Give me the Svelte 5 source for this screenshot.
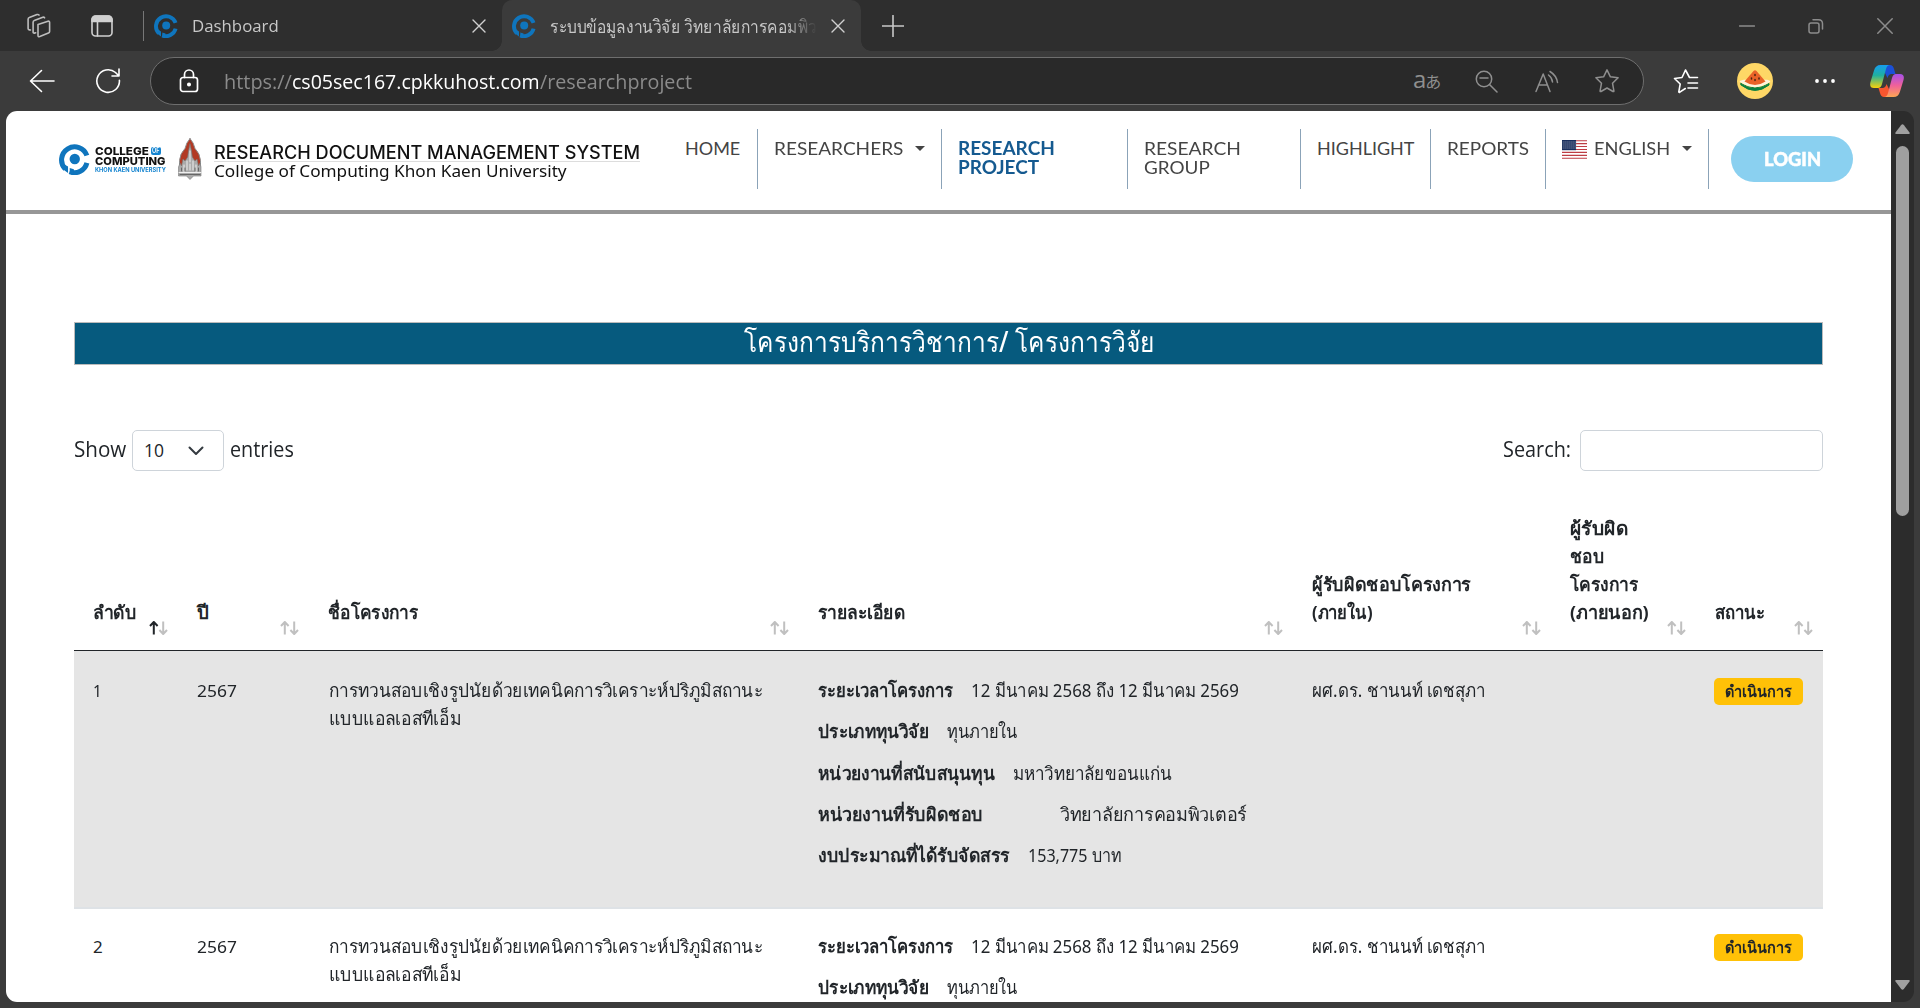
<script>
  const title = 'การทวนสอบเชิงรูปนัยด้วยเทคนิคการวิเคราะห์ปริภูมิสถานะ';
  const nav = [
    { lines: [['HOME', 55]], width: 90 },
    { lines: [['RESEARCHERS', 129]], width: 184, caret: true },
    { lines: [['RESEARCH', 97], ['PROJECT', 81]], width: 186, active: true },
    { lines: [['RESEARCH', 97], ['GROUP', 66]], width: 173 },
    { lines: [['HIGHLIGHT', 97]], width: 130 },
    { lines: [['REPORTS', 82]], width: 115 },
    { lines: [['ENGLISH', 76]], width: 163, caret: true, flag: true }
  ];
  const columns = [
    { lines: [['ลำดับ', 43]], sorted: true },
    { lines: [['ปี', 12]] },
    { lines: [['ชื่อโครงการ', 90]] },
    { lines: [['รายละเอียด', 87]] },
    { lines: [['ผู้รับผิดชอบโครงการ', 159], ['(ภายใน)', 61]] },
    { lines: [['ผู้รับผิด', 58], ['ชอบ', 34], ['โครงการ', 68], ['(ภายนอก)', 79]] },
    { lines: [['สถานะ', 50]] }
  ];
  const details = [
    { label: 'ระยะเวลาโครงการ', lw: 135, value: '12 มีนาคม 2568 ถึง 12 มีนาคม 2569', vw: 268, gap: 18 },
    { label: 'ประเภททุนวิจัย', lw: 111, value: 'ทุนภายใน', vw: 71, gap: 18 },
    { label: 'หน่วยงานที่สนับสนุนทุน', lw: 177, value: 'มหาวิทยาลัยขอนแก่น', vw: 159, gap: 18 },
    { label: 'หน่วยงานที่รับผิดชอบ', lw: 165, value: 'วิทยาลัยการคอมพิวเตอร์', vw: 187, gap: 77 },
    { label: 'งบประมาณที่ได้รับจัดสรร', lw: 192, value: '153,775 บาท', vw: 93, gap: 18 }
  ];
  const rows = [{ no: '1', nw: 9 }, { no: '2', nw: 10 }];

  // Stretches or condenses a run of text so that it fills the given width.
  function fit(node, width) {
    const natural = node.offsetWidth;
    if (natural) node.style.transform = `scaleX(${width / natural})`;
  }
</script>

{#snippet t(text, width)}<span class="fit" style:width="{width}px"><span class="run" use:fit={width}>{text}</span></span>{/snippet}

{#snippet mark(size)}
  <svg class="mark" width={size} height={size} viewBox="0 0 24 24">
    <path d="M4.800 19.300A10.100 10.100 0 1 1 21.600 8.900M21.600 14.600A10 10 0 0 1 8.200 21.500" fill="none" stroke="#0f75bd" stroke-width="3.900" stroke-linecap="butt" />
    <path d="M4.500 16l2.500 1.500v5L3 19.500zM8.300 18.500l3.200 1v4l-3.200-.6z" fill="#0f75bd" />
    <circle cx="12.200" cy="11.600" r="4" fill="#0f75bd" />
  </svg>
{/snippet}

{#snippet cross(size)}
  <svg width={size} height={size} viewBox="0 0 14 14"><path d="M1 1l12 12M13 1L1 13" /></svg>
{/snippet}

<div class="window">
  <div class="tabs">
    <svg class="ic workspaces" width="26" height="26" viewBox="0 0 26 26">
      <path d="M12 11.5 22 8.2q1.6-.4 1.6 1.2v9q0 1.2-1.2 1.6l-8.6 3.6q-1.8.5-1.8-1.2z" />
      <path d="M9.7 19.8l-1.2.3q-1.4.2-1.4-1.2V9.2q0-1.2 1.2-1.6l8.5-3.4q1.2-.4 1.8.7M4.5 17l-1.2-.1q-1.2-.1-1.2-1.4V6.2q0-1.2 1.2-1.6L11 1.6q1.3-.4 2 .5" />
    </svg>
    <svg class="ic panes" width="22" height="22" viewBox="0 0 22 22">
      <rect x="1" y="1" width="20" height="20" rx="3.5" />
      <path d="M1 5a4 4 0 0 1 4-4h12a4 4 0 0 1 4 4v1.5H1z" fill="#d0d0d0" />
      <path d="M6.5 6v15" />
    </svg>
    <i class="split"></i>
    <div class="tab first">
      {@render mark(24)}
      <span class="label">{@render t('Dashboard', 87)}</span>
      <span class="close">{@render cross(14)}</span>
    </div>
    <div class="tab active">
      {@render mark(24)}
      <span class="label fade">{@render t('ระบบข้อมูลงานวิจัย วิทยาลัยการคอมพิวเ', 272)}</span>
      <span class="close">{@render cross(14)}</span>
    </div>
    <svg class="ic plus" width="22" height="22" viewBox="0 0 22 22"><path d="M11 .5v21M.5 11h21" /></svg>
    <div class="controls">
      <svg width="16" height="16" viewBox="0 0 16 16"><path d="M.5 8h15" /></svg>
      <svg width="16" height="16" viewBox="0 0 16 16"><rect x="1" y="5" width="10" height="10" rx="2" /><path d="M5 1.7h5.5q4 0 4 4V11" /></svg>
      <svg width="16" height="16" viewBox="0 0 16 16"><path d="M.8.8l14.4 14.4M15.2.8.8 15.2" /></svg>
    </div>
  </div>

  <div class="toolbar">
    <svg class="ic back" width="26" height="24" viewBox="0 0 26 24"><path d="M1.5 12H25M12.5 1.5 1.5 12l11 10.5" /></svg>
    <svg class="ic reload" width="26" height="26" viewBox="0 0 26 26"><path d="M24.4 12.2A11.3 11.3 0 1 1 20.5 4.5l3 3M24 1v7h-7" /></svg>
    <div class="address">
      <svg class="lock" width="20" height="24" viewBox="0 0 20 24">
        <rect x="1.5" y="8.5" width="17" height="14" rx="2.5" /><path d="M5.5 8.500V5.500a4.500 4.500 0 0 1 9 0v3" /><circle cx="10" cy="15.500" r="1.200" fill="#fff" />
      </svg>
      <span class="url">{@render t('https://', 68)}<b>{@render t('cs05sec167.cpkkuhost.com', 248)}</b>{@render t('/researchproject', 152)}</span>
      <span class="translate"><span>a</span><span class="kana">あ</span></span>
      <svg class="zoomout" width="23" height="23" viewBox="0 0 23 23"><circle cx="9" cy="9" r="7.7" /><path d="M14.5 14.5l7.5 7.5M5 8h8" /></svg>
      <svg class="aloud" width="24" height="23" viewBox="0 0 24 23"><path d="M1 21.500 8.200 4 15 21.500M3.500 15h9M13.500 5q3.500 2.500 4 7M15 1.500q6.500 4 7.500 11" /></svg>
      <svg class="star" width="26" height="26" viewBox="0 0 26 26"><path d="M13 1.800l3.400 7 7.700 1-5.600 5.400 1.400 7.700q0 1-.9.600L13 20l-6 3.500q-.9.400-.9-.6l1.400-7.700-5.600-5.400 7.700-1z" /></svg>
    </div>
    <svg class="ic favs" width="26" height="26" viewBox="0 0 26 26"><path d="M24.500 9.500h-8L12.500 2 9 9.500l-7.500 1 5.700 5.500-1.400 7.800q.2.900 1 .4l5.500-3.700M15 15h9.500M15 20h9.500" /></svg>
    <svg class="avatar" width="36" height="36" viewBox="0 0 36 36">
      <circle cx="18" cy="18" r="18" fill="#fed766" />
      <path d="M4 20.500q14 9 28 0v1.500q-14 11-28 0z" fill="#0b8040" stroke="#0b8040" />
      <path d="M3.500 18.500q14.500 10 29 0l-2.500-1H7z" fill="#fff4dc" stroke="#fff4dc" stroke-width="1.500" />
      <path d="M16.500 8q1.500-1.500 3 0l9 10.500q-10.500 7-21 0z" fill="#ea6328" />
      <path d="M18 11.500v1M14.500 15v1M18 16.500v1M22 15v1" stroke="#472414" stroke-width="1.500" />
    </svg>
    <svg class="dots" width="20" height="4" viewBox="0 0 20 4"><circle cx="2" cy="2" r="1.900" /><circle cx="10" cy="2" r="1.900" /><circle cx="18" cy="2" r="1.900" /></svg>
    <svg class="copilot" width="34" height="32" viewBox="0 0 34 32">
      <defs>
        <linearGradient id="ca" x1="0" y1="0" x2="0" y2="1"><stop offset="0" stop-color="#169df0" /><stop offset=".45" stop-color="#1fb0a0" /><stop offset="1" stop-color="#f9d20a" /></linearGradient>
        <linearGradient id="cb" x1="0" y1="0" x2="0" y2="1"><stop offset="0" stop-color="#a650ea" /><stop offset=".5" stop-color="#f0619a" /><stop offset="1" stop-color="#fda653" /></linearGradient>
      </defs>
      <path d="M11 0h9q3 0 4 4l1.500 5h-4q-3 0-4 4z" fill="#1b50d8" />
      <path d="M23 32h-9q-3 0-4-4l-1.500-5h4q3 0 4-4z" fill="#f8562f" />
      <path d="M10.500 0H20q-3 0-4 4l-4 15q-1 4-4 4H4q-5 0-3.500-6L4 5.500Q5.500 0 10.500 0z" fill="url(#ca)" />
      <path d="M23.500 32H14q3 0 4-4l4-15q1-4 4-4h4q5 0 3.500 6L30 26.500q-1.500 5.500-6.500 5.500z" fill="url(#cb)" />
    </svg>
  </div>

  <div class="view">
    <main class="page">
      <header>
        <div class="brand">
          {@render mark(31)}
          <div class="college">
            <div class="cl">{@render t('COLLEGE', 54)}<span class="of">{@render t('OF', 8)}</span></div>
            <div class="cl">{@render t('COMPUTING', 71)}</div>
            <div class="kku">{@render t('KHON KAEN UNIVERSITY', 71)}</div>
          </div>
          <svg class="temple" width="26" height="42" viewBox="0 0 26 42">
            <path d="M13 .5Q17 5 18 10.500q5 5 5.500 12V33H2.500V22.500Q3 15.500 8 10.500 9 5 13 .5z" fill="#b23a24" stroke="#8e8e8e" />
            <path d="M13 6l1.500 7 .8 6 2.700 4 2-2 1.500 7 1.500-3 1 4v9h-7.500L13 41.500 9.500 38H1.500v-9l1.500-4 1.500 3L6 21l2 2 2.700-4 .8-6z" fill="#aaa" stroke="#777" stroke-width=".6" />
            <path d="M13 13v11M10 23v9M16 23v9M7 27v7M19 27v7M2 34.500h22M13 26v6" stroke="#eee" />
            <path d="M3 36.500h20M8 30v3M18 30v3M4.500 30v3M21.500 30v3" stroke="#666" />
          </svg>
          <div class="system">
            <div class="sys">{@render t('RESEARCH DOCUMENT MANAGEMENT SYSTEM', 426)}</div>
            <div class="sub">{@render t('College of Computing Khon Kaen University', 353)}</div>
          </div>
        </div>
        <nav>
          {#each nav as item}
            <a class:current={item.active} style:width="{item.width}px">
              {#if item.flag}
                <svg class="flag" width="25" height="19" viewBox="0 0 25 19">
                  <rect width="25" height="19" fill="#fff" />
                  <path d="M0 .7h25M0 3.600h25M0 6.500h25M0 9.500h25M0 12.400h25M0 15.400h25M0 18.300h25" stroke="#bd3d44" stroke-width="1.100" />
                  <rect width="14" height="10.200" fill="#192f5d" />
                  <path d="M1 2h13M1 4h13M1 6h13M1 8h13" stroke="#8c97ae" stroke-width=".7" stroke-dasharray="1 1" />
                </svg>
              {/if}
              <span class="words">{#each item.lines as [text, w]}<span class="line">{@render t(text, w)}</span>{/each}</span>
              {#if item.caret}<i class="caret"></i>{/if}
            </a>
          {/each}
        </nav>
        <button class="login">{@render t('LOGIN', 57)}</button>
      </header>

      <section class="content">
        <h4>{@render t('โครงการบริการวิชาการ/ โครงการวิจัย', 410)}</h4>
        <div class="tools">
          <div class="length">
            {@render t('Show', 52)}
            <span class="select">{@render t('10', 20)}
              <svg width="16" height="10" viewBox="0 0 16 10"><path d="M1.500 1.500 8 8l6.500-6.500" /></svg>
            </span>
            {@render t('entries', 64)}
          </div>
          <label class="search">{@render t('Search:', 68)}<input /></label>
        </div>

        <div class="row head">
          {#each columns as col}
            <div class="cell">
              {#each col.lines as [text, w]}<div>{@render t(text, w)}</div>{/each}
              <svg class="sort" width="19" height="14" viewBox="0 0 19 14">
                <path class:on={col.sorted} d="M4.800 13.500V1.500M1 5l3.800-4 3.800 4" />
                <path d="M14.200.5v12M10.400 9l3.800 4L18 9" />
              </svg>
            </div>
          {/each}
        </div>
        {#each rows as row, i}
          <div class="row item" class:striped={i % 2 === 0}>
            <div class="cell num">{@render t(row.no, row.nw)}</div>
            <div class="cell num">{@render t('2567', 40)}</div>
            <div class="cell name"><div>{@render t(title, 434)}</div><div>{@render t('แบบแอลเอสทีเอ็ม', 132)}</div></div>
            <div class="cell details">
              {#each details as d}
                <div class="detail" style:gap="{d.gap}px"><b>{@render t(d.label, d.lw)}</b>{@render t(d.value, d.vw)}</div>
              {/each}
            </div>
            <div class="cell">{@render t('ผศ.ดร. ชานนท์ เดชสุภา', 174)}</div>
            <div class="cell"></div>
            <div class="cell"><span class="badge">{@render t('ดำเนินการ', 67)}</span></div>
          </div>
        {/each}
      </section>
    </main>
    <div class="scrollbar">
      <svg width="15" height="11" viewBox="0 0 15 11"><path d="M1.500 10q-2 0-1-1.600L6 1.200q1.500-1.700 3 0l5.500 7.200q1 1.600-1 1.600z" /></svg>
      <div class="thumb"></div>
      <svg class="down" width="15" height="11" viewBox="0 0 15 11"><path d="M1.500 1q-2 0-1 1.600L6 9.800q1.500 1.700 3 0l5.500-7.200q1-1.600-1-1.600z" /></svg>
    </div>
  </div>
</div>

<style>
  :global(body) { background: #3b3b3b; overflow: hidden; }
  * { box-sizing: border-box; }
  svg { display: block; flex: none; fill: none; stroke-linecap: round; stroke-linejoin: round; }
  .fit { display: inline-block; white-space: nowrap; flex: none; }
  .run { display: inline-block; transform-origin: 0 50%; }
  .window { width: 1920px; height: 1008px; overflow: hidden; background: #3b3b3b; font-family: 'Open Sans', 'Noto Sans', sans-serif; }
  .ic { stroke: #fff; stroke-width: 1.6; }

  .tabs { display: flex; height: 51px; background: #2e2e2e; align-items: center; }
  .workspaces { margin-left: 26px; stroke: #bdbdbd; }
  .panes { margin-left: 39px; stroke: #d0d0d0; }
  .split { width: 1px; height: 30px; margin-left: 30px; background: #777; }
  .tab { display: flex; align-items: center; height: 51px; color: #c8c8c8; font-size: 17px; line-height: 24px; }
  .first { width: 358px; padding-left: 10px; }
  .active { width: 359px; padding-left: 10px; background: #3b3b3b; border-radius: 10px 10px 0 0; position: relative; }
  .active::before, .active::after { content: ''; position: absolute; bottom: 0; width: 10px; height: 10px; }
  .active::before { left: -10px; background: radial-gradient(circle at 0 0, #2e2e2e 9.500px, #3b3b3b 10px); }
  .active::after { right: -10px; background: radial-gradient(circle at 100% 0, #2e2e2e 9.500px, #3b3b3b 10px); }
  .label { margin-left: 14px; width: 267px; overflow: hidden; white-space: nowrap; padding: 4px 0; }
  .fade { font-size: 18px; mask-image: linear-gradient(90deg, #000 88%, transparent 100%); }
  .close { margin-left: 14px; stroke: #d0d0d0; stroke-width: 1.400; }
  .first .close { margin-left: 13px; }
  .plus { margin-left: 21px; stroke: #c8c8c8; }
  .controls { display: flex; gap: 53px; margin-left: auto; padding-right: 27px; stroke: #8c8c8c; stroke-width: 1.500; }

  .toolbar { display: flex; align-items: center; height: 60px; background: #3b3b3b; }
  .back { margin-left: 29px; }
  .reload { margin-left: 40px; }
  .address { display: flex; align-items: center; width: 1494px; height: 48px; margin-left: 29px; border: 1px solid #6e6e6e; border-radius: 24px; background: #292929; stroke: #8f8f8f; stroke-width: 1.500; }
  .lock { margin-left: 28px; stroke: #fff; stroke-width: 1.700; }
  .url { margin-left: 25px; color: #8b8b8b; font-size: 20.500px; line-height: 28px; stroke: none; white-space: nowrap; }
  .url b { font-weight: 400; color: #fff; }
  .translate { display: flex; align-items: center; width: 27px; margin-left: 721px; color: #8f8f8f; stroke: none; font-size: 24px; font-weight: 400; line-height: 28px; }
  .translate span:first-child { margin-top: -5px; }
  .kana { font-family: 'Noto Sans CJK JP', sans-serif; font-size: 16px; margin-left: -1px; }
  .zoomout { margin-left: 35px; }
  .aloud { margin-left: 37px; }
  .star { margin-left: 35px; }
  .favs { margin-left: 29px; }
  .avatar { margin-left: 38px; }
  .dots { margin-left: 42px; fill: #fff; }
  .copilot { margin-left: 35px; }

  .view { display: flex; width: 1908px; height: 891px; margin-left: 6px; border-radius: 11px; overflow: hidden; background: #2c2c2c; }
  .page { width: 1885px; height: 891px; overflow: hidden; background: #fff; color: #212529; }
  .scrollbar { display: flex; flex-direction: column; align-items: center; width: 23px; padding: 13px 0 12px; }
  .scrollbar svg { fill: #a0a0a0; }
  .thumb { width: 13px; height: 370px; margin-top: 11px; border-radius: 7px; background: #9f9f9f; }
  .down { margin-top: auto; }

  header { display: flex; height: 103px; border-bottom: 4px solid #979797; }
  .brand { display: flex; width: 662px; padding-left: 53px; }
  .brand > :global(.mark) { margin-top: 33px; }
  .college { width: 71px; margin: 36px 0 0 5px; font-family: Inter, sans-serif; font-weight: 800; color: #111; }
  .cl { display: flex; height: 9.500px; font-size: 11px; line-height: 9.500px; }
  .of { display: flex; width: 10px; height: 8px; padding-left: 1px; margin-left: 2px; border-radius: 2px; background: #1484d0; color: #fff; font-size: 7px; font-weight: 600; line-height: 8px; }
  .kku { display: flex; color: #1484d0; font-size: 6.500px; line-height: 8px; font-weight: 700; }
  .temple { margin: 27px 0 0 11px; }
  .system { margin: 31px 0 0 11px; width: 426px; color: #111; }
  .sys { display: flex; height: 20px; border-bottom: 1px solid #ddd; font: 500 18px/21px Inter, sans-serif; }
  .sub { display: flex; font: 400 16.500px/17px 'Noto Sans', sans-serif; }
  nav { display: flex; margin-top: 18px; height: 60px; }
  a { display: flex; padding: 10px 0 0 16px; border-right: 1px solid #8ba3b8; color: #444; font: 400 18px/19px Lato, sans-serif; }
  a:first-child { padding-left: 17px; }
  .words, .line { display: block; }
  .line { height: 19px; }
  a.current { color: #155a90; font-weight: 700; }
  .flag { margin: 1px 7px 0 0; }
  .caret { width: 0; height: 0; margin: 7px 0 0 12px; border: 5px solid transparent; border-top-color: #444; border-bottom: 0; }
  .login { display: flex; justify-content: center; width: 122px; height: 46px; margin: 25px 0 0 22px; padding: 0; border: 0; border-radius: 23px; background: #8ad0f0; color: #fff; font: 900 19px/46px Lato, sans-serif; -webkit-text-stroke: .5px #fff; }

  .content { width: 1749px; margin-left: 68px; padding-top: 108px; }
  h4 { display: flex; justify-content: center; height: 43px; margin: 0; border: 1px solid #bbb; background: #065a7e; color: #fff; font: 500 28px/37px 'Noto Sans', sans-serif; }
  .tools { display: flex; justify-content: space-between; height: 41px; margin-top: 65px; font-size: 21px; line-height: 39px; }
  .length, .search, .select { display: flex; }
  .select { align-items: center; justify-content: space-between; width: 92px; height: 41px; margin: 0 6px; padding: 0 19px 0 11px; border: 1px solid #ced4da; border-radius: 5px; font-size: 17.500px; stroke: #343a40; stroke-width: 2; }
  .select :global(.fit) { stroke: none; }
  input { width: 243px; height: 41px; margin-left: 9px; border: 1px solid #ced4da; border-radius: 5px; background: #fff; }

  .row { display: grid; grid-template-columns: 104px 131px 490px 494px 258px 145px 127px; font: 400 18.500px/28px 'Noto Sans', sans-serif; }
  .head { height: 140px; margin-top: 40px; border-bottom: 1px solid #212529; font-weight: 700; align-items: end; }
  .head .cell { position: relative; padding-bottom: 24px; }
  .cell { padding-left: 19px; }
  .cell.name { padding-left: 20px; }
  .num { font-size: 17px; padding-top: 1px; }
  .sort { position: absolute; right: 10px; bottom: 15px; stroke: #c0c0c0; stroke-width: 2; stroke-linecap: butt; }
  .on { stroke: #212529; }
  .item { height: 258px; padding-top: 23px; border-bottom: 2px solid #dee2e6; }
  .striped { padding-top: 25px; background: #e5e5e5; }
  .details { display: flex; flex-direction: column; gap: 13.300px; }
  .detail { display: flex; }
  b { font-weight: 700; }
  .badge { display: flex; justify-content: center; width: 89px; height: 27px; margin: 2px 0 0 -1px; border-radius: 5px; background: #ffc107; font-size: 16px; font-weight: 700; line-height: 27px; }
</style>
